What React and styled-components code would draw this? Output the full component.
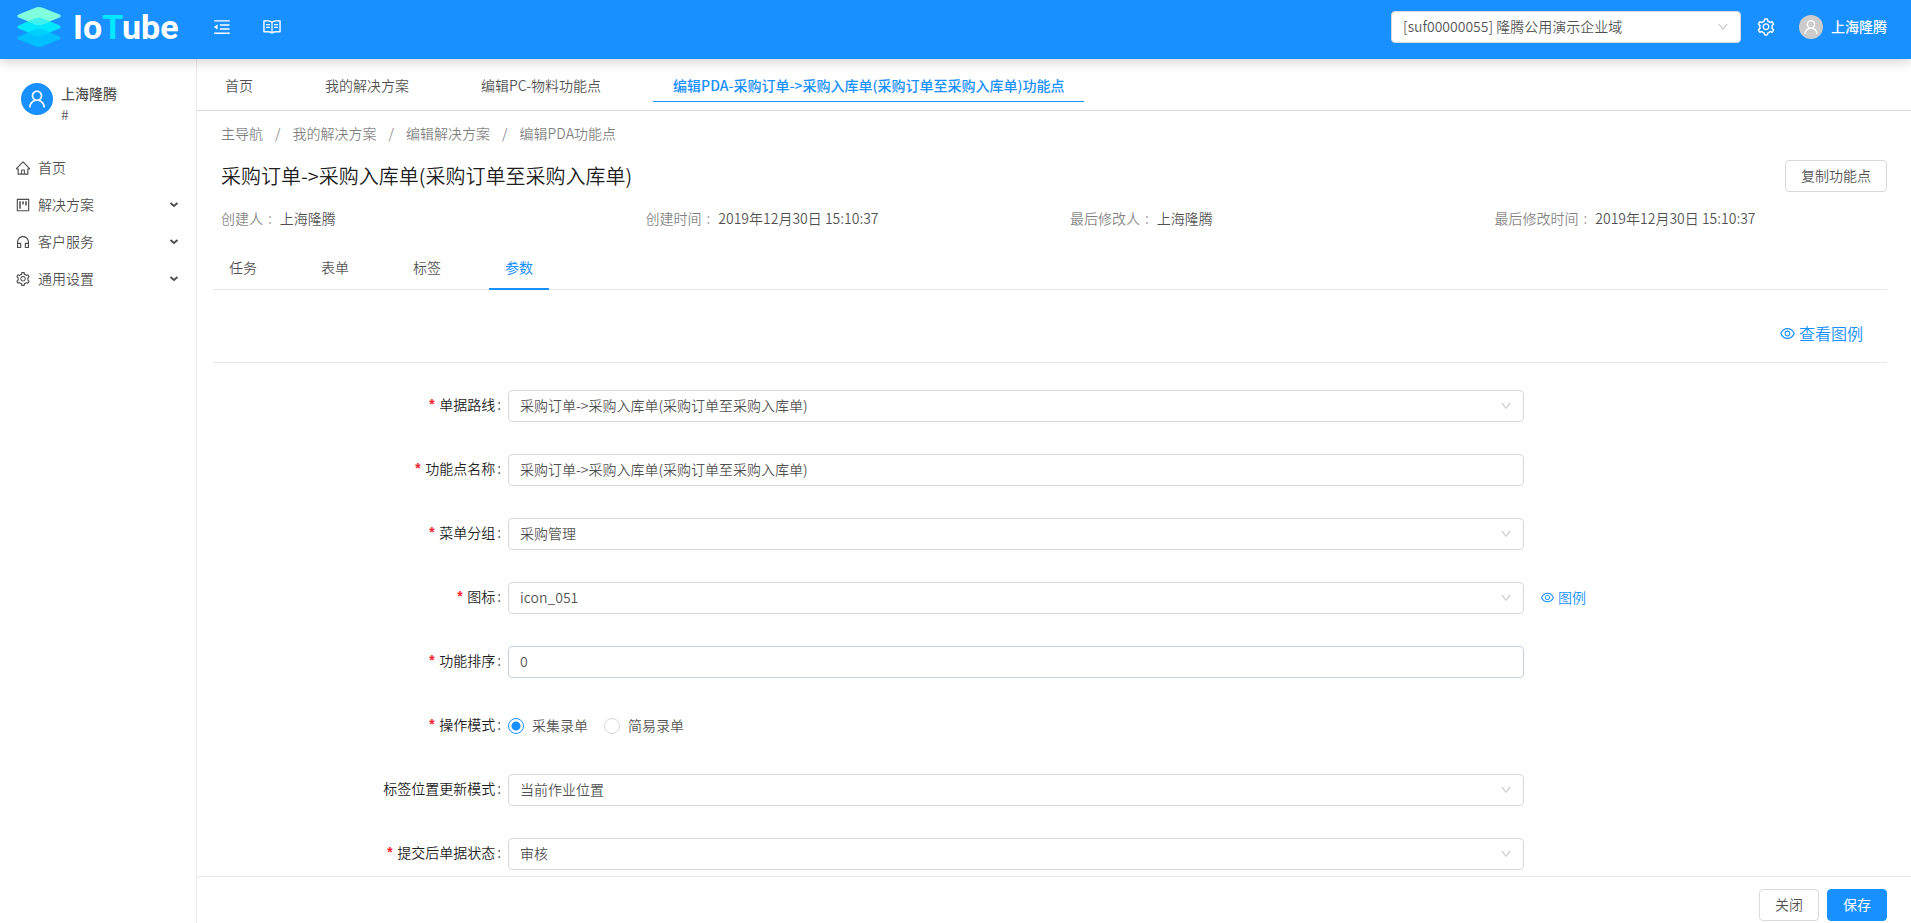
import React from 'react';
import styled, { createGlobalStyle, css } from 'styled-components';
import {
    AiOutlineCustomerService,
    AiOutlineDown,
    AiOutlineEye,
    AiOutlineHome,
    AiOutlineMenuFold,
    AiOutlineProject,
    AiOutlineRead,
    AiOutlineSetting,
    AiOutlineUser,
} from 'react-icons/ai';

const GlobalStyle = createGlobalStyle`
*, *::before, *::after {
    box-sizing: border-box;
}

body {
    margin: 0;
    color: rgba(0, 0, 0, 0.7);
    background: #fff;
    font: 14px/22px "Noto Sans CJK SC", sans-serif;
    font-weight: 350;
}

button, input, select {
    font: inherit;
    color: inherit;
}

a {
    color: inherit;
    text-decoration: none;
}

ul, ol, dl, dd, h1 {
    margin: 0;
    padding: 0;
    list-style: none;
}

svg {
    flex: none;
    display: block;
}
`;

const Page = styled.div`
height: 100vh;
display: flex;
flex-direction: column;
overflow: hidden;
`;

const Header = styled.header`
position: relative;
z-index: 2;
flex: none;
height: 59px;
padding: 0 24px 5px 17px;
display: flex;
align-items: center;
color: #fff;
background: #1890ff;
box-shadow: 0 2px 12px rgba(0, 0, 0, 0.2);
`;

const Logo = styled.a`
display: flex;
align-items: center;
margin-right: 32px;
`;

const IconButton = styled.button`
padding: 0;
border: 0;
background: none;
font-size: 20px;
margin-right: ${props => props.$gap || 0}px;
cursor: pointer;
`;

const HeaderRight = styled.div`
margin-left: auto;
display: flex;
align-items: center;
`;

const UserLink = styled.a`
display: flex;
align-items: center;
gap: 8px;
`;

const UserName = styled.span`
padding-bottom: 2px;
font-weight: 500;
`;

const Avatar = styled.span`
flex: none;
display: flex;
align-items: center;
justify-content: center;
border-radius: 50%;
color: #fff;
width: ${props => props.$size}px;
height: ${props => props.$size}px;
font-size: ${props => props.$icon}px;
background: ${props => props.$color};
`;

const controlStyle = css`
width: 100%;
height: 32px;
padding: 0 11px 2px;
border: 1px solid ${props => props.$border || '#d9d9d9'};
border-radius: 4px;
background: #fff;
color: rgba(0, 0, 0, 0.7);
outline: none;

&:focus {
    border-color: #40a9ff;
}
`;

const Input = styled.input`
${controlStyle}
`;

const SelectBox = styled.span`
position: relative;
display: block;
width: ${props => props.$width || '100%'};
margin-right: ${props => props.$gap || 0}px;

svg {
    position: absolute;
    top: 10px;
    right: 12px;
    font-size: 12px;
    color: rgba(0, 0, 0, 0.25);
    pointer-events: none;
}
`;

const NativeSelect = styled.select`
${controlStyle}
padding-right: 32px;
appearance: none;
`;

const Body = styled.div`
flex: 1;
min-height: 0;
display: flex;
`;

const Sidebar = styled.aside`
flex: none;
width: 197px;
border-right: 1px solid #f0e6e9;
`;

const Profile = styled.div`
display: flex;
gap: 8px;
padding: 24px 16px 0 21px;
margin-bottom: 24px;
`;

const ProfileName = styled.div`
font-weight: 500;
line-height: 20px;
`;

const ProfileNote = styled.div`
line-height: 22px;
`;

const MenuItem = styled.li`
height: 37px;
`;

const MenuLink = styled.a`
height: 100%;
display: flex;
align-items: center;
gap: 7px;
padding: 0 17px 0 15px;

> svg:first-child {
    font-size: 16px;
}
`;

const MenuText = styled.span`
flex: 1;
padding-bottom: 2px;
`;

const Main = styled.main`
flex: 1;
min-width: 0;
display: flex;
flex-direction: column;
`;

const PageTabs = styled.nav`
flex: none;
height: 52px;
padding: 11px 8px 0;
display: flex;
align-items: flex-start;
gap: 32px;
border-bottom: 1px solid #d9d9d9;
`;

const PageTab = styled.a`
padding: 4px 20px 5px;
white-space: nowrap;
border-bottom: 1px solid ${props => (props.$active ? '#1890ff' : 'transparent')};
color: ${props => (props.$active ? '#1890ff' : 'inherit')};
font-weight: ${props => (props.$active ? 500 : 350)};
`;

const Content = styled.div`
flex: 1;
min-height: 0;
overflow: hidden;
padding: 11px 24px 0 16px;
`;

const Crumbs = styled.ol`
display: flex;
padding-left: 8px;
color: rgba(0, 0, 0, 0.5);
`;

const Crumb = styled.li`
& + &::before {
    content: '/';
    margin: 0 12px;
}
`;

const TitleRow = styled.div`
display: flex;
justify-content: space-between;
align-items: center;
padding-left: 8px;
margin: 16px 0 15px;
`;

const Title = styled.h1`
font-size: 20px;
line-height: 32px;
font-weight: 350;
color: rgba(0, 0, 0, 0.9);
`;

const Button = styled.button`
height: 32px;
padding: 0 15px 2px;
border: 1px solid ${props => (props.$primary ? '#1890ff' : '#d9d9d9')};
border-radius: 4px;
background: ${props => (props.$primary ? '#1890ff' : '#fff')};
color: ${props => (props.$primary ? '#fff' : 'inherit')};
font-weight: ${props => (props.$primary ? 400 : 350)};
cursor: pointer;
`;

const Meta = styled.dl`
display: grid;
grid-template-columns: repeat(4, 1fr);
margin-right: -24px;
`;

const MetaItem = styled.div`
display: flex;
padding-left: 8px;

dt {
    color: rgba(0, 0, 0, 0.5);
}

dt::after {
    content: ':';
    margin: 0 8px 0 5px;
}
`;

const ContentTabs = styled.nav`
display: flex;
gap: 32px;
margin-top: 17px;
border-bottom: 1px solid #e8e8e8;
`;

const ContentTab = styled.a`
padding: 10px 16px;
margin-bottom: -1px;
border-bottom: 2px solid ${props => (props.$active ? '#1890ff' : 'transparent')};
color: ${props => (props.$active ? '#1890ff' : 'inherit')};
font-weight: ${props => (props.$active ? 400 : 350)};
`;

const Toolbar = styled.div`
display: flex;
justify-content: flex-end;
padding: 31px 24px 17px 0;
border-bottom: 1px solid #e8e8e8;
`;

const ViewLink = styled.a`
display: inline-flex;
align-items: center;
gap: 3px;
font-size: ${props => (props.$large ? 16 : 14)}px;
line-height: 24px;
color: #1890ff;

svg {
    font-size: ${props => (props.$large ? 17 : 15)}px;
}
`;

const Form = styled.form`
display: flex;
flex-direction: column;
gap: 32px;
padding-top: 27px;
`;

const FormRow = styled.div`
display: grid;
grid-template-columns: 295fr 1016fr 363fr;
align-items: center;
min-height: 32px;
`;

const Label = styled.label`
padding-bottom: 2px;
text-align: right;
color: rgba(0, 0, 0, 0.9);

&::before {
    content: '${props => (props.$required ? '*' : '')}';
    margin-right: 3px;
    color: #f5222d;
    font-family: "Liberation Mono", monospace;
    font-weight: 700;
}

&::after {
    content: ':';
    margin: 0 7px 0 2px;
}
`;

const Extra = styled.div`
padding: 0 0 2px 16px;
display: flex;
`;

const RadioGroup = styled.div`
display: flex;
gap: 16px;
`;

const RadioLabel = styled.label`
display: flex;
align-items: center;
gap: 8px;
`;

const RadioText = styled.span`
padding-bottom: 2px;
`;

const Radio = styled.input`
appearance: none;
width: 16px;
height: 16px;
margin: 0;
border: 1px solid #d9d9d9;
border-radius: 50%;
background: #fff;

&:checked {
    border-color: #1890ff;
    background: radial-gradient(circle, #1890ff 4px, #fff 5px);
}
`;

const Footer = styled.footer`
flex: none;
display: flex;
justify-content: flex-end;
gap: 8px;
padding: 12px 24px 2px;
border-top: 1px solid #e8e8e8;
`;

const menu = [
    { text: '首页', icon: AiOutlineHome },
    { text: '解决方案', icon: AiOutlineProject, children: true },
    { text: '客户服务', icon: AiOutlineCustomerService, children: true },
    { text: '通用设置', icon: AiOutlineSetting, children: true },
];

const pageTabs = ['首页', '我的解决方案', '编辑PC-物料功能点', '编辑PDA-采购订单->采购入库单(采购订单至采购入库单)功能点'];

const crumbs = ['主导航', '我的解决方案', '编辑解决方案', '编辑PDA功能点'];

const meta = [
    ['创建人', '上海隆腾'],
    ['创建时间', '2019年12月30日 15:10:37'],
    ['最后修改人', '上海隆腾'],
    ['最后修改时间', '2019年12月30日 15:10:37'],
];

const contentTabs = ['任务', '表单', '标签', '参数'];

const route = '采购订单->采购入库单(采购订单至采购入库单)';

const fields = [
    { id: 'route', label: '单据路线', type: 'select', value: route, required: true },
    { id: 'name', label: '功能点名称', type: 'text', value: route, required: true },
    { id: 'group', label: '菜单分组', type: 'select', value: '采购管理', required: true },
    { id: 'icon', label: '图标', type: 'select', value: 'icon_051', required: true, example: true },
    { id: 'sort', label: '功能排序', type: 'text', value: '0', required: true, border: '#c3d3e0' },
    { id: 'mode', label: '操作模式', type: 'radio', value: '采集录单', options: ['采集录单', '简易录单'], required: true },
    { id: 'position', label: '标签位置更新模式', type: 'select', value: '当前作业位置' },
    { id: 'status', label: '提交后单据状态', type: 'select', value: '审核', required: true },
];

function LogoImage() {
    return (
        <svg width="163" height="44" viewBox="0 0 163 44" role="img" aria-label="IoTube">
            <path d="M1.500 31.500L19 24q3-1.200 6 0l17.500 7.500q2.500 1.500 0 3L25 41.500q-3 1.200-6 0L1.500 34.500q-2.500-1.500 0-3z" fill="#00bfff" />
            <path d="M1.500 20.500L19 13q3-1.200 6 0l17.500 7.500q2.500 1.500 0 3L25 30.500q-3 1.200-6 0L1.500 23.500q-2.500-1.500 0-3z" fill="#00e8ff" />
            <path d="M1.500 9.500L19 2.500q3-1.200 6 0L42.500 9.500q2.500 1.500 0 3L25 19.500q-3 1.200-6 0L1.500 12.500q-2.500-1.500 0-3z" fill="#80ffdc" />
            <path d="M11 16.300L19 13q3-1.200 6 0l8 3.300-8 3.200q-3 1.200-6 0z" fill="#40f0ee" />
            <path d="M11 27.300L19 24q3-1.200 6 0l8 3.300-8 3.200q-3 1.200-6 0z" fill="#00d0ff" />
            <text x="56" y="34" fontFamily="Roboto, sans-serif" fontWeight="700" fontSize="34" fill="#fff">
                Io<tspan fill="#00e8ff">T</tspan>ube
            </text>
        </svg>
    );
}

function MenuArrow() {
    return (
        <svg width="10" height="10" viewBox="0 0 10 10" fill="none" stroke="currentColor" strokeWidth="1.800">
            <path d="M1.500 3L5 6L8.500 3" />
        </svg>
    );
}

function Select({ id, value, label, width, gap }) {
    return (
        <SelectBox $width={width} $gap={gap}>
            <NativeSelect id={id} defaultValue={value} aria-label={label}>
                <option value={value}>{value}</option>
            </NativeSelect>
            <AiOutlineDown />
        </SelectBox>
    );
}

function Field({ id, label, type, value, options, required, border, example }) {
    return (
        <FormRow>
            <Label
                as={type === 'radio' ? 'span' : 'label'}
                id={`${id}-label`}
                htmlFor={type === 'radio' ? undefined : id}
                $required={required}
            >
                {label}
            </Label>
            {type === 'select' && <Select id={id} value={value} />}
            {type === 'text' && <Input id={id} type="text" defaultValue={value} $border={border} />}
            {type === 'radio' && (
                <RadioGroup role="radiogroup" aria-labelledby={`${id}-label`}>
                    {options.map(option => (
                        <RadioLabel key={option}>
                            <Radio type="radio" name={id} defaultChecked={option === value} />
                            <RadioText>{option}</RadioText>
                        </RadioLabel>
                    ))}
                </RadioGroup>
            )}
            {example && (
                <Extra>
                    <ViewLink href="#example"><AiOutlineEye />图例</ViewLink>
                </Extra>
            )}
        </FormRow>
    );
}

function App() {
    return (
        <>
            <GlobalStyle />
            <Page>
                <Header>
                    <Logo href="#home"><LogoImage /></Logo>
                    <IconButton $gap={30} aria-label="收起菜单"><AiOutlineMenuFold /></IconButton>
                    <IconButton aria-label="文档"><AiOutlineRead /></IconButton>
                    <HeaderRight>
                        <Select value="[suf00000055] 隆腾公用演示企业域" label="企业域" width="350px" gap={15} />
                        <IconButton $gap={23} aria-label="设置"><AiOutlineSetting /></IconButton>
                        <UserLink href="#user">
                            <Avatar $size={24} $icon={18} $color="#ccc"><AiOutlineUser /></Avatar>
                            <UserName>上海隆腾</UserName>
                        </UserLink>
                    </HeaderRight>
                </Header>
                <Body>
                    <Sidebar>
                        <Profile>
                            <Avatar $size={32} $icon={22} $color="#1890ff"><AiOutlineUser /></Avatar>
                            <div>
                                <ProfileName>上海隆腾</ProfileName>
                                <ProfileNote>#</ProfileNote>
                            </div>
                        </Profile>
                        <ul>
                            {menu.map(item => (
                                <MenuItem key={item.text}>
                                    <MenuLink href="#menu">
                                        <item.icon />
                                        <MenuText>{item.text}</MenuText>
                                        {item.children && <MenuArrow />}
                                    </MenuLink>
                                </MenuItem>
                            ))}
                        </ul>
                    </Sidebar>
                    <Main>
                        <PageTabs>
                            {pageTabs.map((tab, i) => (
                                <PageTab key={tab} href="#tab" $active={i === 3}>{tab}</PageTab>
                            ))}
                        </PageTabs>
                        <Content>
                            <Crumbs>
                                {crumbs.map(crumb => (
                                    <Crumb key={crumb}><a href="#crumb">{crumb}</a></Crumb>
                                ))}
                            </Crumbs>
                            <TitleRow>
                                <Title>{route}</Title>
                                <Button type="button">复制功能点</Button>
                            </TitleRow>
                            <Meta>
                                {meta.map(([name, value]) => (
                                    <MetaItem key={name}>
                                        <dt>{name}</dt>
                                        <dd>{value}</dd>
                                    </MetaItem>
                                ))}
                            </Meta>
                            <ContentTabs>
                                {contentTabs.map((tab, i) => (
                                    <ContentTab key={tab} href="#content" $active={i === 3}>{tab}</ContentTab>
                                ))}
                            </ContentTabs>
                            <Toolbar>
                                <ViewLink href="#legend" $large><AiOutlineEye />查看图例</ViewLink>
                            </Toolbar>
                            <Form>
                                {fields.map(field => (
                                    <Field key={field.id} {...field} />
                                ))}
                            </Form>
                        </Content>
                        <Footer>
                            <Button type="button">关闭</Button>
                            <Button type="button" $primary>保存</Button>
                        </Footer>
                    </Main>
                </Body>
            </Page>
        </>
    );
}

export default App;
